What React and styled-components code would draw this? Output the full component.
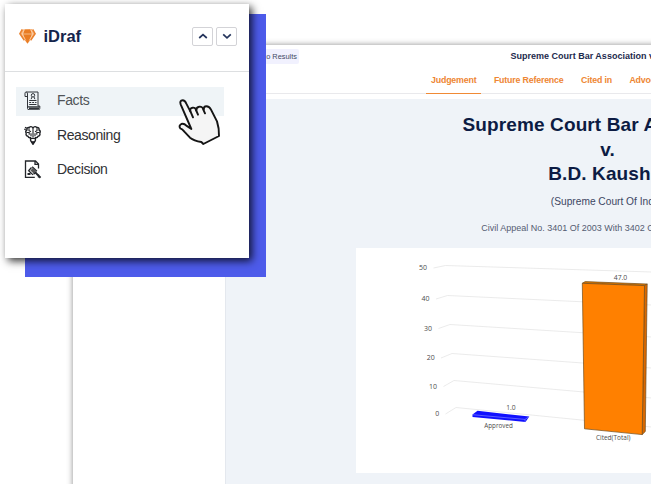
import React from "react";
import styled, { createGlobalStyle } from "styled-components";

const GlobalStyle = createGlobalStyle`
  * { box-sizing: border-box; }
  body { margin: 0; background: #fff; font-family: "Liberation Sans", Arial, sans-serif; }
  h1, p { margin: 0; }
`;

const Page = styled.div`
  position: relative;
  width: 651px;
  height: 484px;
  overflow: hidden;
  padding: 45px 0 0 73px;
`;

const Viewer = styled.main`
  width: 916px;
  height: 480px;
  background: #fff;
  box-shadow: 0 0 6px rgba(0, 0, 0, 0.45);
`;

const ViewerHeader = styled.header`
  height: 54px;
`;

const TitleBar = styled.div`
  display: flex;
  align-items: flex-start;
  height: 23px;
  padding: 4px 0 0 160px;
`;

const BackChip = styled.span`
  width: 66px;
  height: 15px;
  border-radius: 2px;
  background: #f1f1fe;
  color: #444b63;
  font-size: 7.4px;
  line-height: 16px;
  text-align: right;
  padding-right: 2px;
`;

const CaseTitle = styled.span`
  margin-left: 211.5px;
  color: #1d2a4d;
  font-size: 9px;
  font-weight: 700;
  line-height: 15px;
  letter-spacing: 0.01px;
  white-space: nowrap;
`;

const Tabs = styled.nav`
  display: flex;
  height: 26px;
  padding-left: 353px;
  border-bottom: 1px solid #e9e9ec;
`;

const Tab = styled.a`
  height: 26px;
  margin-right: 8.3px;
  padding: 0 4.2px 0 5px;
  border-bottom: 1px solid ${(p) => (p.$active ? "#f08a35" : "transparent")};
  color: #ee8633;
  font-size: 8.8px;
  font-weight: 700;
  line-height: 25px;
  letter-spacing: -0.17px;
  white-space: nowrap;
`;

const ViewerBody = styled.div`
  display: grid;
  grid-template-columns: 153px 763px;
  height: 426px;
`;

const SidePane = styled.aside`
  border-right: 1px solid #e4e8ee;
`;

const Article = styled.article`
  display: flex;
  flex-direction: column;
  align-items: center;
  padding-top: 14px;
  background: #eff3f8;
`;

const CaseHeading = styled.h1`
  color: #0c1b43;
  font-size: 19px;
  font-weight: 700;
  line-height: 24.5px;
  letter-spacing: 0.12px;
  text-align: center;
`;

const Court = styled.p`
  margin-top: 8px;
  padding-left: 1px;
  color: #3c4663;
  font-size: 10.2px;
  line-height: 14px;
`;

const Appeal = styled.p`
  margin-top: 13px;
  padding-left: 11px;
  color: #555c72;
  font-size: 9px;
  line-height: 12px;
`;

const ChartPanel = styled.section`
  width: 504px;
  height: 225px;
  margin-top: 14px;
  background: #fff;

  svg { display: block; }
`;

const ChartText = styled.text`
  fill: #4c4c4c;
  font-family: "Open Sans", sans-serif;
  font-size: 7px;
  text-anchor: middle;
`;

const Backdrop = styled.div`
  position: absolute;
  left: 25px;
  top: 14px;
  width: 241px;
  height: 263px;
  background: #4d5bea;
`;

const Card = styled.section`
  position: absolute;
  left: 5px;
  top: 4px;
  width: 244px;
  height: 254px;
  background: #fff;
  box-shadow: 3px 3px 8px rgba(0, 0, 0, 0.8);
`;

const CardHeader = styled.header`
  display: flex;
  align-items: center;
  height: 68px;
  padding: 0 12px 3px 14px;
  border-bottom: 1px solid #dddfe1;
`;

const Brand = styled.span`
  flex: 1;
  margin-left: 7.5px;
  padding-top: 1px;
  color: #15244b;
  font-size: 16.5px;
  font-weight: 700;
`;

const StepButton = styled.button`
  display: flex;
  align-items: center;
  justify-content: center;
  width: 21px;
  height: 19px;
  margin-left: 3px;
  padding: 0;
  border: 1px solid #d3d3d7;
  border-radius: 2px;
  background: #fff;
`;

const Menu = styled.nav`
  display: flex;
  flex-direction: column;
  gap: 5.5px;
  padding: 15px 25px 0 11px;
`;

const MenuItem = styled.a`
  display: flex;
  align-items: center;
  gap: 15px;
  height: 29px;
  padding: 0 8px 3px;
  background: ${(p) => (p.$active ? "#eff4f7" : "transparent")};
  color: ${(p) => (p.$active ? "#505458" : "#303134")};
  font-size: 14px;
  letter-spacing: -0.4px;
`;

const Pointer = styled.svg`
  position: absolute;
  left: 178px;
  top: 98px;
`;

const Gem = () => (
  <svg width="17" height="17" viewBox="0 0 17 17">
    <path d="M3.2 1.5 12.8 1 16.2 6 8.5 15.8.8 6z" fill="#f7b176" />
    <path d="M5.6 1.6h5.8l1.4 4.3-2.2 6.4-2.1 3.2-2.2-3.2L4.2 6z" fill="#e97c23" />
    <path d="M3.3 1.5.9 5.7l4.5 6.5M13.6 1.5l2.5 4.2-4.5 6.5" fill="none" stroke="#ea822f" strokeWidth="1.6" />
    <path d="M5.4 1.5 3.2 6l3.6 6.5M11.6 1.5 13.9 6l-3.6 6.5M4 6h9" fill="none" stroke="#ffe1c4" strokeWidth=".6" />
  </svg>
);

const Chevron = ({ up }) => (
  <svg width="10" height="7" viewBox="0 0 10 7">
    <path d={up ? "M1.2 5 5 1.6 8.8 5" : "M1.2 1.4 5 4.8l3.8-3.4"} fill="none" stroke="#24345c" strokeWidth="1.7" />
  </svg>
);

const ScrollIcon = () => (
  <svg width="18" height="20" viewBox="0 -1 18 20" fill="none" stroke="#30343a">
    <path d="M3.5 5.5H1V2.2Q1 1 2.3 1H14V15h1.8v2.3q0 1.5-1.4 1.5H5q-1.5 0-1.5-1.5V3Q3.5 1.2 2.3 1" />
    <path d="M3.8 15.8h11.6M5 17.5h10" strokeWidth="1.3" />
    <circle cx="9" cy="4.3" r="1.7" />
    <path d="m8 6-.9 2.2M10 6l.9 2.2M5.2 9.5h7.3M5.2 11.5h2m1 0h1.9m1 0h1.4M5.2 13.5h7.3" />
  </svg>
);

const BrainIcon = () => (
  <svg width="18" height="20" viewBox="0 -.5 18 20" fill="none" stroke="#202226" strokeWidth="1.4">
    <path d="M9 2.3Q7 .2 5.2 2 2.5 1.7 3 4.3 1 5.5 2.2 7.6 1.4 10 4 10.8q.5 1.8 2.6 1.4V15q2.4 4.2 4.8 0v-2.8q2 .4 2.6-1.4 2.6-.8 1.8-3.2 1.2-2.1-.8-3.3.5-2.6-2.2-2.3Q11 .2 9 2.3Z" />
    <path d="M9 2.3v9.9M6.8 13h4.4M5 2.8v2.4l2 1M2.7 7h2.5v2.2M7 7.7v3M13 2.8v2.4l-2 1M15.3 7h-2.5v2.2M11 7.7v3M0 3.8h2M1 1.8l1.8 1" strokeWidth="1.1" />
    <path d="M7.5 16.5h3L9 18.8z" fill="#202226" />
  </svg>
);

const GavelIcon = () => (
  <svg width="18" height="20" viewBox="0 -.5 18 20" fill="none" stroke="#24272b">
    <path d="M10.8 17.8H1.5V1.5h10l3 3V9M11 1.8v3h3M14.5 15v3" strokeWidth="1.3" />
    <path d="m8.2 7.2 4.7 4.5M7.5 8 4.8 11m7.3 1.2-2.5 2.6M4.2 10.7 9 15.4" strokeWidth="1.3" />
    <path d="m8.7 8.6 3 3-2 2.3-3.3-3z" fill="#555" stroke="none" />
    <path d="m11 12.6 5.5 5.6M3.5 14.5h3" strokeWidth="2" />
  </svg>
);

const GRID_LINES = [
  "M433 268 445 265.5 651 272",
  "M435.5 299 447 295.5 651 305",
  "M438 328.5 449.5 324.5 651 337",
  "M440.5 358 451.5 353.5 651 368",
  "M443 386.5 453.5 380.5 651 398",
  "M445 414 455.5 407.5 651 427",
];

const LABELS = [
  { x: 422.5, y: 270, w: 8, t: "50" },
  { x: 425, y: 301, w: 8, t: "40" },
  { x: 427.5, y: 331, w: 8, t: "30" },
  { x: 430.3, y: 360, w: 8, t: "20" },
  { x: 432.5, y: 389, w: 8, t: "10" },
  { x: 436.8, y: 416, w: 4, t: "0" },
  { x: 510.4, y: 410.3, w: 9.5, t: "1.0" },
  { x: 498, y: 428, w: 28.5, t: "Approved" },
  { x: 620, y: 279.8, w: 13.5, t: "47.0" },
  { x: 612.7, y: 440, w: 34.5, t: "Cited(Total)" },
];

const CitationChart = () => (
  <svg width="504" height="225" viewBox="355.5 248 504 225">
    {GRID_LINES.map((d) => (
      <path key={d} d={d} fill="none" stroke="#e6e6e6" strokeWidth=".8" />
    ))}
    <g stroke="#704c1c" strokeWidth=".7" strokeLinejoin="round">
      <path d="M581.8 283.3 584.7 281.6 646.7 284 644 285.6z" fill="#d67500" />
      <path d="M644 285.6 646.7 284 644.8 431.5 641.7 434.6z" fill="#d96800" />
      <path d="M581.8 283.3 644 285.6 641.7 434.6 584 428.8z" fill="#ff8000" />
    </g>
    <path d="M472 414.5 477 410.8 528.8 416.6 525 422 472 417z" fill="#1010ff" />
    <path d="M472 414.7 524.5 419.4 528.5 416.7M524.5 419.4 524.7 422" fill="none" stroke="#8d96ff" strokeWidth=".6" />
    {LABELS.map((l) => (
      <ChartText key={l.t} x={l.x} y={l.y} textLength={l.w} lengthAdjust="spacingAndGlyphs">
        {l.t}
      </ChartText>
    ))}
  </svg>
);

export default function App() {
  return (
    <Page>
      <GlobalStyle />
      <Viewer>
        <ViewerHeader>
          <TitleBar>
            <BackChip>Back to Results</BackChip>
            <CaseTitle>Supreme Court Bar Association v. B.D. Kaushik</CaseTitle>
          </TitleBar>
          <Tabs>
            <Tab $active>Judgement</Tab>
            <Tab>Future Reference</Tab>
            <Tab>Cited in</Tab>
            <Tab>Advocates</Tab>
          </Tabs>
        </ViewerHeader>
        <ViewerBody>
          <SidePane />
          <Article>
            <CaseHeading>
              Supreme Court Bar Association
              <br />
              v.
              <br />
              B.D. Kaushik
            </CaseHeading>
            <Court>(Supreme Court Of India)</Court>
            <Appeal>Civil Appeal No. 3401 Of 2003 With 3402 Of 2003 &amp; 3403 Of 2003</Appeal>
            <ChartPanel>
              <CitationChart />
            </ChartPanel>
          </Article>
        </ViewerBody>
      </Viewer>
      <Backdrop />
      <Card>
        <CardHeader>
          <Gem />
          <Brand>iDraf</Brand>
          <StepButton aria-label="Previous"><Chevron up /></StepButton>
          <StepButton aria-label="Next"><Chevron /></StepButton>
        </CardHeader>
        <Menu>
          <MenuItem $active><ScrollIcon />Facts</MenuItem>
          <MenuItem><BrainIcon />Reasoning</MenuItem>
          <MenuItem><GavelIcon />Decision</MenuItem>
        </Menu>
      </Card>
      <Pointer width="44" height="49" viewBox="54 54 132 147">
        <path
          d="M62 73Q58 61 68 61 75 61 79 71L91 94Q89 84 98 83 106 82 109 91 109 81 118 80 127 79 131 89 131 79 139 79 148 79 153 89L171 124Q178 146 177 168L130 192 124 186Q102 182 90 173L73 155Q67 147 61 145 55 137 64 132 72 129 79 137L94 147z"
          fill="#f5f5f5" stroke="#151515" strokeWidth="5.8" strokeLinejoin="round"
        />
        <path d="m90 91 9 21m9-22 6 14m16-15 5 11" fill="none" stroke="#151515" strokeWidth="5.8" strokeLinecap="round" />
      </Pointer>
    </Page>
  );
}
